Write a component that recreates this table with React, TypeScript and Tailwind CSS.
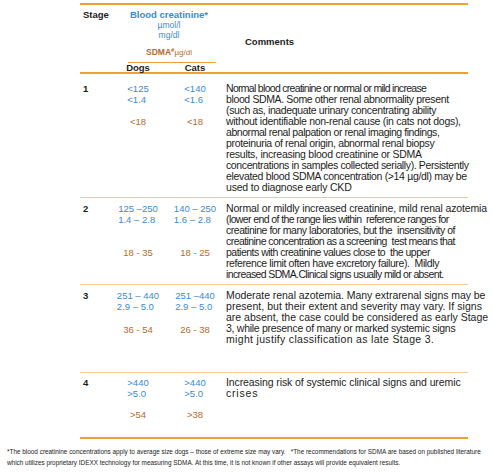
import React from "react";

type Row = {
  stage: string;
  dogs: [string, string, string];
  cats: [string, string, string];
  box: string;
  gap: string;
  lines: [string, string][];
};

const rows: Row[] = [
  {
    stage: "1",
    dogs: ["<125", "<1.4", "<18"],
    cats: ["<140", "<1.6", "<18"],
    box: "h-[124px] pt-[9px] border-b border-[#f6c98a]",
    gap: "mt-[11px]",
    lines: [
      ["Normal blood creatinine or normal or mild increase", "tracking-[-0.7px]"],
      ["blood SDMA. Some other renal abnormality present", "tracking-[-0.37px]"],
      ["(such as, inadequate urinary concentrating ability", "tracking-[-0.36px]"],
      ["without identifiable non-renal cause (in cats not dogs),", "tracking-[-0.29px]"],
      ["abnormal renal palpation or renal imaging findings,", "tracking-[-0.44px]"],
      ["proteinuria of renal origin, abnormal renal biopsy", "tracking-[-0.34px]"],
      ["results, increasing blood creatinine or SDMA", "tracking-[-0.26px]"],
      ["concentrations in samples collected serially). Persistently", "tracking-[-0.38px]"],
      ["elevated blood SDMA concentration (>14 µg/dl) may be", "tracking-[-0.33px]"],
      ["used to diagnose early CKD", "tracking-[-0.2px]"],
    ],
  },
  {
    stage: "2",
    dogs: ["125 –250", "1.4 – 2.8", "18 - 35"],
    cats: ["140 – 250", "1.6 – 2.8", "18 - 25"],
    box: "h-[87px] pt-[5px] border-b border-[#f6c98a]",
    gap: "mt-[22px]",
    lines: [
      ["Normal or mildly increased creatinine, mild renal azotemia", "tracking-[-0.15px]"],
      ["(lower end of the range lies within  reference ranges for", "tracking-[-0.6px]"],
      ["creatinine for many laboratories, but the  insensitivity of", "tracking-[-0.46px]"],
      ["creatinine concentration as a screening  test means that", "tracking-[-0.56px]"],
      ["patients with creatinine values close to  the upper", "tracking-[-0.5px]"],
      ["reference limit often have excretory failure).  Mildly", "tracking-[-0.4px]"],
      ["increased SDMA.Clinical signs usually mild or absent.", "tracking-[-0.62px]"],
    ],
  },
  {
    stage: "3",
    dogs: ["251 – 440", "2.9 – 5.0", "36 - 54"],
    cats: ["251 –440", "2.9 – 5.0", "26 - 38"],
    box: "h-[88px] pt-[5px] border-b border-[#f6c98a]",
    gap: "mt-[12px]",
    lines: [
      ["Moderate renal azotemia. Many extrarenal signs may be", "tracking-[-0.05px]"],
      ["present, but their extent and severity may vary. If signs", "tracking-[0.04px]"],
      ["are absent, the case could be considered as early Stage", "tracking-[0px]"],
      ["3, while presence of many or marked systemic signs", "tracking-[-0.28px]"],
      ["might justify classification as late Stage 3.", "tracking-[0.32px]"],
    ],
  },
  {
    stage: "4",
    dogs: [">440", ">5.0", ">54"],
    cats: [">440", ">5.0", ">38"],
    box: "h-[66px] pt-[4px] border-b-2 border-[#f0a030]",
    gap: "mt-[10px]",
    lines: [
      ["Increasing risk of systemic clinical signs and uremic", "tracking-[-0.1px]"],
      ["crises", "tracking-[0.8px]"],
    ],
  },
];

const Values = ({ v, gap, w }: { v: [string, string, string]; gap: string; w: string }) => (
  <div className={`${w} shrink-0 flex flex-col items-center text-[9.5px] leading-[11px]`}>
    <div className="text-[#3a8ad3] whitespace-pre">
      <div>{v[0]}</div>
      <div>{v[1]}</div>
    </div>
    <div className={`${gap} text-[#b36b2c] whitespace-pre`}>{v[2]}</div>
  </div>
);

const App: React.FC = () => {
  return (
    <div className="w-[492px] h-[472px] bg-white overflow-hidden text-[#1c1c1c] font-['Liberation_Sans',Arial,sans-serif]">
      <div className="ml-[80px] w-[388px] pt-[3px]">
        {/* header */}
        <div className="h-[71px] flex border-t-2 border-b-2 border-[#f0a030]">
          <div className="w-[32px] shrink-0 pl-[3px] pt-[4px] text-[9.5px] leading-[11px] font-bold">Stage</div>
          <div className="w-[114px] shrink-0 pt-[4px] flex flex-col items-center text-center">
            <div className="text-[9.5px] leading-[11px] font-bold text-[#3a8ad3]">Blood creatinine*</div>
            <div className="text-[8.5px] leading-[10px] text-[#3a8ad3]">µmol/l</div>
            <div className="text-[8.5px] leading-[10px] text-[#3a8ad3]">mg/dl</div>
            <div className="mt-[4px] leading-[11px] text-[#b36b2c]">
              <span className="text-[8.5px] font-bold">SDMA</span>
              <sup className="text-[6px] font-bold">#</sup>
              <span className="text-[8px]">µg/dl</span>
            </div>
            <div className="mt-[4px] self-start ml-[16px] w-[88px] border-b border-[#f0a030]" />
            <div className="self-stretch flex text-[9.5px] leading-[10px] font-bold">
              <div className="w-[52px] text-center">Dogs</div>
              <div className="w-[62px] text-center">Cats</div>
            </div>
          </div>
          <div className="pl-[19px] pt-[31px] text-[9.5px] leading-[11px] font-bold">Comments</div>
        </div>

        {rows.map((r) => (
          <div key={r.stage} className={`flex ${r.box}`}>
            <div className="w-[32px] shrink-0 pl-[3px] text-[9.5px] leading-[11px] font-bold">{r.stage}</div>
            <Values v={r.dogs} gap={r.gap} w="w-[52px]" />
            <Values v={r.cats} gap={r.gap} w="w-[62px]" />
            <div className="shrink-0 text-[10.5px] leading-[11px]">
              {r.lines.map(([t, tr], i) => (
                <div key={i} className={`whitespace-pre ${tr}`}>
                  {t}
                </div>
              ))}
            </div>
          </div>
        ))}
      </div>

      <div className="mt-[7px] pl-[7px] text-[6.4px] leading-[11px] text-[#222] whitespace-pre">
        <div>
          *The blood creatinine concentrations apply to average size dogs – those of extreme size may vary.   *The recommendations for SDMA are based on published literature
        </div>
        <div>
          which utilizes proprietary IDEXX technology for measuring SDMA. At this time, it is not known if other assays will provide equivalent results.
        </div>
      </div>
    </div>
  );
};

export default App;
